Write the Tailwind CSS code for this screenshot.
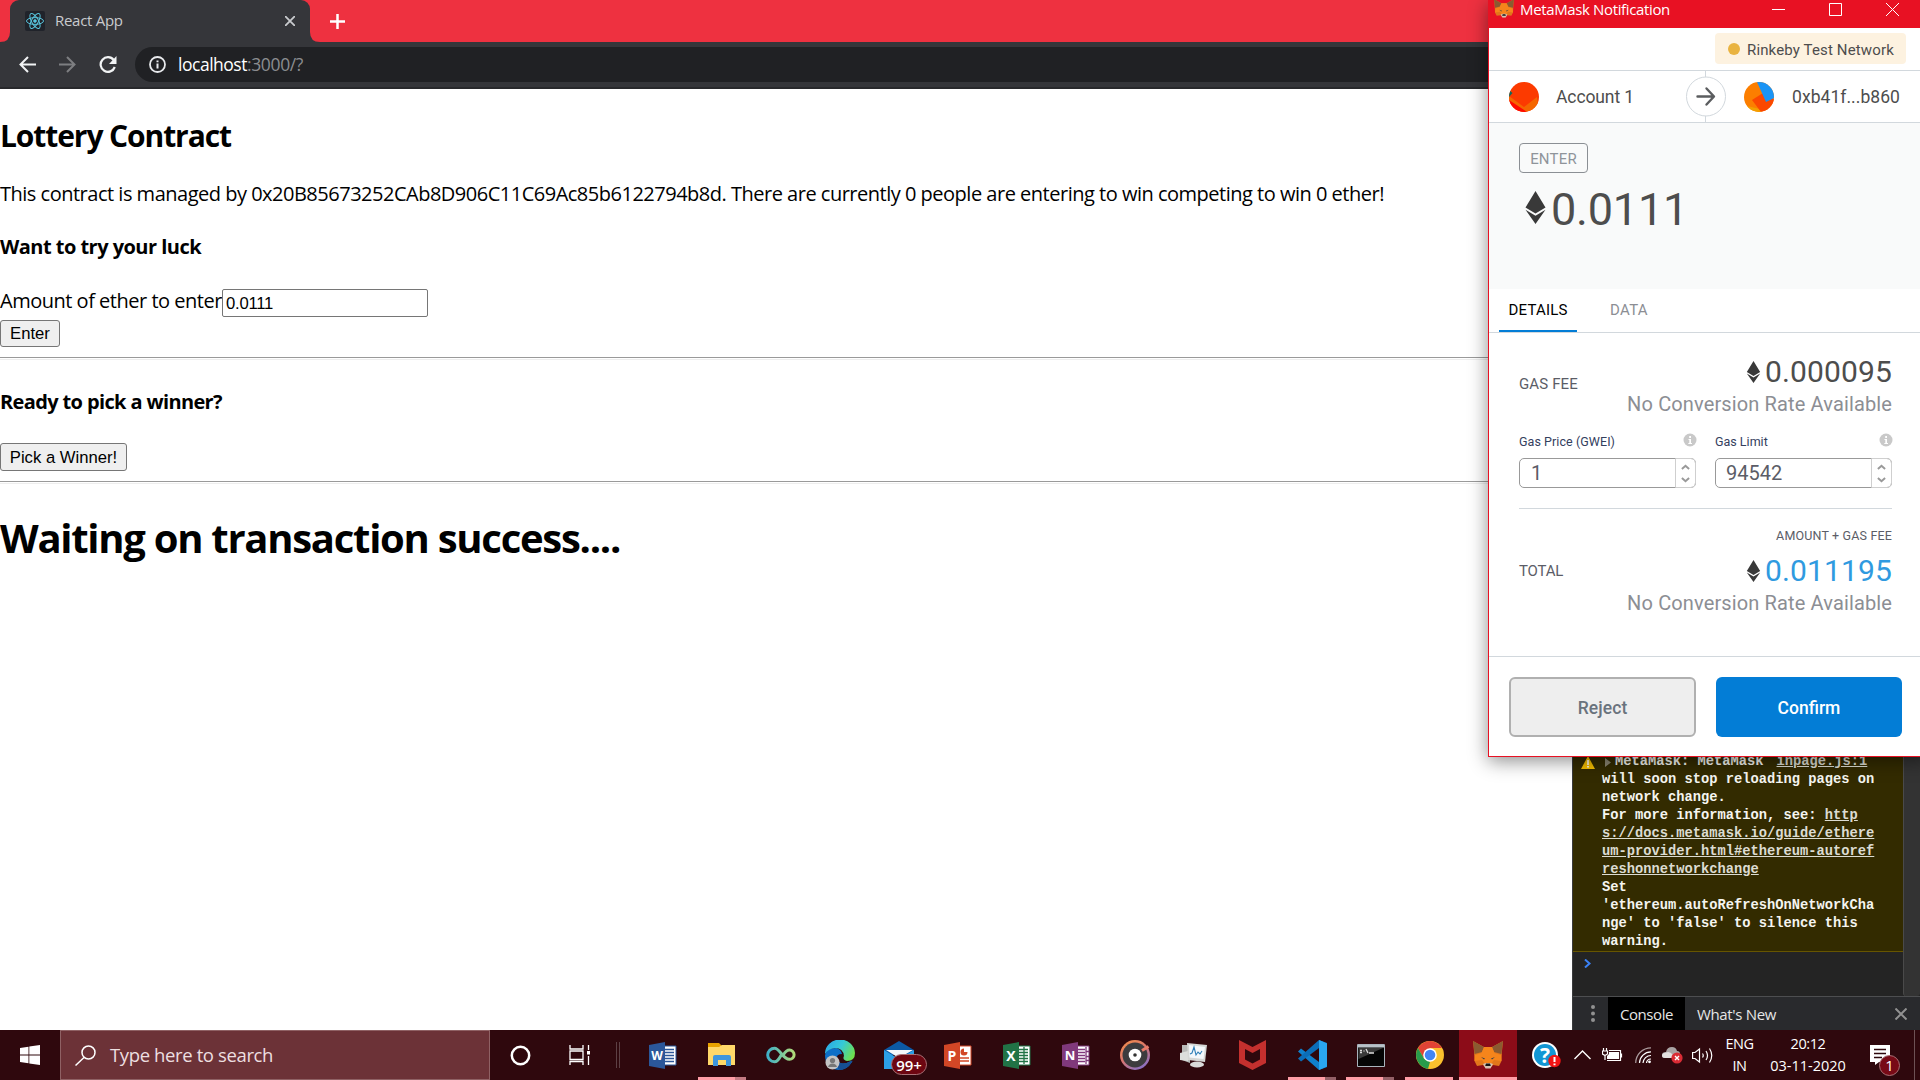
<!DOCTYPE html>
<html lang="en">
<head>
<meta charset="utf-8">
<title>React App</title>
<script src="https://cdn.jsdelivr.net/npm/@tailwindcss/browser@4"></script>
</head>
<body class="bg-white">
<svg class="hidden">
  <symbol id="fox" viewBox="0 0 30 28">
    <path fill="#e2761b" d="M0 0L11 6H19L30 0L29 10L28.500 20L26 25L20 24L17 27H13L10 24L4 25L1.500 20L1 10Z"/>
    <path fill="#8a5a32" d="M0 0L11 6L9 11L1.500 13L1 8ZM30 0L19 6L21 11L28.500 13L29 8Z"/>
    <path fill="#f6851b" d="M11 6H19L21.500 12L28 14L28.500 20L21 19L18 23H12L9 19L1.500 20L2 14L8.500 12Z"/>
    <path fill="#3b3f48" d="M8 16L12 17.500L11 18.500ZM22 16L18 17.500L19 18.500Z"/>
    <path fill="#d7c1b3" d="M10 23L13 22H17L20 23L17.500 27.500H12.500Z"/>
    <path fill="#161616" d="M13 22.500H17L17.800 25H12.200Z"/>
  </symbol>
  <symbol id="eth" viewBox="0 0 20 33">
    <path fill="#393939" d="M10 0L20 16.500L10 22.500L0 16.500ZM0 18.800L10 24.700L20 18.800L10 33Z"/>
  </symbol>
  <symbol id="hint" viewBox="0 0 14 14">
    <circle cx="7" cy="7" r="6.500" fill="#c9c9c9"/><path fill="#fff" d="M5.500 6H8V10H9V11H5.300V10H6.300V7H5.500ZM6.200 3H8V4.900H6.200Z"/>
  </symbol>
  <symbol id="spin" viewBox="0 0 10 20">
    <path fill="none" stroke="#999" stroke-width="2.200" d="M1 5L5 1.500L9 5M1 15L5 18.500L9 15"/>
  </symbol>
</svg>

<div class="relative flex h-[1080px] w-[1920px] flex-col overflow-hidden font-['Open_Sans',sans-serif]">

  <!-- Browser chrome -->
  <header class="shrink-0">
    <div class="flex h-[42px] items-center bg-[#ee3140]">
      <svg class="h-[42px] w-[10px]"><path fill="#35363a" d="M0 42H10V32Q10 42 0 42Z"/></svg>
      <div class="flex h-[42px] w-[300px] items-center rounded-t-[9px] bg-[#35363a] pl-[15px]">
        <svg class="size-5 rounded-[2px] bg-[#20232a]" viewBox="0 0 20 20" fill="none" stroke="#58c4dc" stroke-width="1"><ellipse cx="10" cy="10" rx="8.500" ry="3.400"/><ellipse cx="10" cy="10" rx="8.500" ry="3.400" transform="rotate(60 10 10)"/><ellipse cx="10" cy="10" rx="8.500" ry="3.400" transform="rotate(120 10 10)"/><circle cx="10" cy="10" r="1.300" fill="#58c4dc"/></svg>
        <span class="ml-[10px] text-[15px] leading-5 tracking-[-0.28px] whitespace-nowrap text-[#c9cbce] -mt-0.5">React App</span>
        <svg class="mr-[15px] ml-auto size-[10px]" viewBox="0 0 10 10" stroke="#c9cbce" stroke-width="1.800"><path d="M0 0L10 10M10 0L0 10"/></svg>
      </div>
      <svg class="h-[42px] w-[10px]"><path fill="#35363a" d="M0 32Q0 42 10 42H0Z"/></svg>
      <svg class="ml-[10px] size-[15px]" viewBox="0 0 15 15" stroke="#fff" stroke-width="2.500"><path d="M7.500 0V15M0 7.500H15"/></svg>
    </div>
    <div class="flex h-[47px] items-center border-b-2 border-[#28292c] bg-[#35363a] pl-[19px]">
      <svg class="size-[17px]" viewBox="0 0 17 17" fill="none" stroke="#f1f3f4" stroke-width="2"><path d="M17 8.500H2M9 1L1.500 8.500L9 16"/></svg>
      <svg class="ml-[23px] size-[17px]" viewBox="0 0 17 17" fill="none" stroke="#7d7e81" stroke-width="2"><path d="M0 8.500H15M8 1L15.500 8.500L8 16"/></svg>
      <svg class="ml-[23px] size-[18px]" viewBox="0 0 18 18" fill="none" stroke="#f1f3f4" stroke-width="2.200"><path d="M14.700 4A7.300 7.300 0 1 0 15.800 11"/><path d="M17.500 0V8H10Z" fill="#f1f3f4" stroke="none"/></svg>
      <div class="ml-[18px] flex h-[35px] flex-1 items-center rounded-l-full bg-[#202124] pl-[14px]">
        <svg class="size-[17px]" viewBox="0 0 17 17"><circle cx="8.500" cy="8.500" r="7.500" fill="none" stroke="#e8eaed" stroke-width="1.800"/><path fill="#e8eaed" d="M7.500 4.500H9.500V6.300H7.500ZM7.500 7.500H9.500V12.500H7.500Z"/></svg>
        <span class="-mt-0.5 ml-3 text-[17.5px] leading-6 tracking-[-0.48px] whitespace-nowrap text-white">localhost<span class="tracking-[-0.37px] text-[#8b8d90]">:3000/?</span></span>
      </div>
    </div>
  </header>

  <div class="flex h-[941px] shrink-0">
    <!-- Page content -->
    <main class="flex w-[1572px] flex-col items-start bg-white text-[20px] leading-[27px] whitespace-nowrap text-black">
      <h2 class="mt-[27px] text-[30px] leading-10 font-bold tracking-[-1.09px]">Lottery Contract</h2>
      <p class="mt-[24px] tracking-[-0.495px]">This contract is managed by 0x20B85673252CAb8D906C11C69Ac85b6122794b8d. There are currently 0 people are entering to win competing to win 0 ether!</p>
      <h4 class="mt-[26px] font-bold tracking-[-0.53px]">Want to try your luck</h4>
      <div class="mt-[28px] flex h-[29px] items-end">
        <label class="w-[222px] pb-[3px] tracking-[-0.49px]">Amount of ether to enter</label>
        <div class="flex h-[28px] w-[206px] items-center rounded-[2px] border border-[#767676] pl-[3px] font-['Liberation_Sans',sans-serif] text-[16.67px] tracking-[-0.25px]">0.0111</div>
      </div>
      <button class="mt-[3px] flex h-[27px] w-[60px] items-center justify-center rounded-[3px] border border-[#767676] bg-[#efefef] font-['Liberation_Sans',sans-serif] text-[16.67px]">Enter</button>
      <hr class="mt-[10px] h-[3px] w-full border-t border-b border-t-[#9a9a9a] border-b-[#eee]">
      <h4 class="mt-[28px] font-bold tracking-[-0.63px]">Ready to pick a winner?</h4>
      <button class="mt-[28px] flex h-[28px] w-[127px] items-center justify-center rounded-[3px] border border-[#767676] bg-[#efefef] font-['Liberation_Sans',sans-serif] text-[16.67px]">Pick a Winner!</button>
      <hr class="mt-[10px] h-[3px] w-full border-t border-b border-t-[#9a9a9a] border-b-[#eee]">
      <h1 class="mt-[27px] text-[40px] leading-[54px] font-bold tracking-[-1.27px]">Waiting on transaction success....</h1>
    </main>

    <!-- Developer tools -->
    <aside class="flex w-[348px] flex-col border-l border-[#3a3b3d] bg-[#242424]">
      <div class="flex h-[908px] border-b border-[#4d4e50]">
        <div class="flex w-[330px] flex-col">
          <div class="flex flex-1 flex-col justify-end border-b border-[#665500] bg-[#332b00]">
            <div class="flex pl-2">
              <svg class="mt-[3px] h-[13px] w-[14px]" viewBox="0 0 14 13"><path fill="#f4bd00" d="M7 0L14 13H0Z"/><path fill="#fff" d="M6.200 4H7.800V9H6.200ZM6.200 10H7.800V11.500H6.200Z"/></svg>
              <div class="ml-[7px] font-['Liberation_Mono',monospace] text-[13.75px] leading-[18px] font-bold whitespace-nowrap text-[#f5f5f0]">
                <div class="flex items-center"><svg class="ml-[3px] h-[9px] w-[6px]" viewBox="0 0 6 9"><path fill="#8b8672" d="M0 0L6 4.500L0 9Z"/></svg><span class="ml-[4px]">MetaMask: MetaMask</span><span class="ml-[13px] text-[#dcdcd2] underline">inpage.js:1</span></div>
                <div>will soon stop reloading pages on</div>
                <div>network change.</div>
                <div>For more information, see: <span class="text-[#dcdcd2] underline">http</span></div>
                <div class="text-[#dcdcd2] underline">s://docs.metamask.io/guide/ethere</div>
                <div class="text-[#dcdcd2] underline">um-provider.html#ethereum-autoref</div>
                <div class="text-[#dcdcd2] underline">reshonnetworkchange</div>
                <div>Set</div>
                <div>'ethereum.autoRefreshOnNetworkCha</div>
                <div>nge' to 'false' to silence this</div>
                <div>warning.</div>
              </div>
            </div>
          </div>
          <div class="h-[44px] pt-[7px] pl-[11px]"><svg class="h-[9px] w-[7px]" viewBox="0 0 7 9" fill="none" stroke="#3b82f6" stroke-width="2"><path d="M1 .5L5.500 4.500L1 8.500"/></svg></div>
        </div>
        <div class="flex-1 rounded-b-[3px] border-l border-[#4a4a4a] bg-[#333]"></div>
      </div>
      <div class="flex h-[33px] items-center bg-[#292a2d]">
        <svg class="ml-[18px] h-[17px] w-[4px]" viewBox="0 0 4 17" fill="#919191"><circle cx="2" cy="2" r="2"/><circle cx="2" cy="8.500" r="2"/><circle cx="2" cy="15" r="2"/></svg>
        <div class="ml-[13px] flex h-full w-[77px] items-center justify-center bg-black pt-0.5 text-[15px] tracking-[-0.44px] text-[#e6e6e6]">Console</div>
        <span class="ml-3 pt-0.5 text-[15px] tracking-[-0.34px] whitespace-nowrap text-[#e6e6e6]">What's New</span>
        <svg class="mr-[13px] ml-auto size-3" viewBox="0 0 12 12" stroke="#919191" stroke-width="2"><path d="M.5 .5L11.500 11.500M11.500 .5L.5 11.500"/></svg>
      </div>
    </aside>
  </div>

  <!-- Taskbar -->
  <footer class="flex h-[50px] shrink-0 items-center bg-[#2f080d]">
    <div class="flex w-[60px] justify-center"><svg class="size-5" viewBox="0 0 20 20" fill="#fff"><path d="M0 3L8.500 1.700V9.500H0ZM9.300 1.500L20 0V9.500H9.300ZM0 10.500H8.500V18.300L0 17ZM9.300 10.500H20V20L9.300 18.500Z"/></svg></div>
    <div class="flex h-[50px] w-[430px] items-center border border-[#8f6164] bg-[#6c3237] pl-[14px]">
      <svg class="size-[21px]" viewBox="0 0 21 21" fill="none" stroke="#fff" stroke-width="1.500"><circle cx="13.500" cy="7.500" r="6.500"/><path d="M9 12.500L.5 20.500"/></svg>
      <span class="ml-[14px] text-[18.5px] tracking-[-0.38px] whitespace-nowrap text-[#ecdfe0]">Type here to search</span>
    </div>
    <svg class="ml-5 size-[21px]" viewBox="0 0 21 21"><circle cx="10.500" cy="10.500" r="8.700" fill="none" stroke="#fff" stroke-width="2.500"/></svg>
    <svg class="ml-[38px] h-[20px] w-[22px]" viewBox="0 0 22 20" fill="none" stroke="#fff" stroke-width="1.300"><path d="M1 0V4H14V0M1 6H14V14.500H1ZM1 20V16.500H14V20M19.500 0V5M19.500 11V20"/><path fill="#fff" stroke="none" d="M18 6H21V9.500H18Z"/></svg>
    <div class="ml-[25px] h-[26px] w-1 border-x border-[#5d4044]"></div>
    <div class="ml-[13px] flex h-[50px]">
      <div class="flex w-[59px] items-center justify-center"><svg class="h-[27px] w-[28px]" viewBox="0 0 28 27"><path fill="#fff" stroke="#2b579a" d="M14 4H27V23H14Z"/><path stroke="#2b579a" stroke-width="1.300" d="M16 7.500H25M16 10.500H25M16 13.500H25M16 16.500H25M16 19.500H25"/><path fill="#2b579a" d="M0 3L16 0V27L0 24Z"/><text x="8" y="18" fill="#fff" font-size="12" font-weight="700" text-anchor="middle">W</text></svg></div>
      <div class="relative flex w-[59px] items-center justify-center"><svg class="h-[24px] w-[28px]" viewBox="0 0 28 24"><path fill="#e8a200" d="M0 0H11L14 3V8H0Z"/><path fill="#ffd869" d="M0 4H11L14 2H27V22H0Z"/><path fill="#3f96dc" d="M5 23V14Q5 12 7 12H21Q23 12 23 14V23H18V17H10V23Z"/></svg><div class="absolute bottom-0 left-[6px] flex h-[3px] w-[48px] bg-[#ff9da6]"><div class="ml-auto w-[11px] bg-[#c47b83]"></div></div></div>
      <div class="flex w-[59px] items-center justify-center"><svg class="h-[18px] w-[30px]" viewBox="0 0 30 18"><defs><linearGradient id="inf"><stop offset="0" stop-color="#3fb0c8"/><stop offset="1" stop-color="#b0dc78"/></linearGradient></defs><path fill="none" stroke="url(#inf)" stroke-width="3" d="M15.500 8.500C13.500 12 12 15.800 8.500 15.800A6.800 6.800 0 1 1 8.500 2.200C14 2.200 16.500 13.300 23.500 13.300A4.600 4.600 0 1 0 23.500 4.100C20 4.100 18.500 7 17 9.500"/></svg></div>
      <div class="flex w-[59px] items-center justify-center"><svg class="size-[30px]" viewBox="0 0 30 30"><defs><linearGradient id="edg" x1="0" x2="1" y1=".2" y2=".6"><stop offset="0" stop-color="#2aa8e8"/><stop offset=".5" stop-color="#35c9d8"/><stop offset="1" stop-color="#6fe04c"/></linearGradient></defs><path fill="#0d6fc8" d="M0 15Q2 8 11 8Q16 9 17 14Q11 14 12 19Q15 27 26 21Q28 20 27 22Q22 30 14 30Q0 29 0 15Z"/><path fill="url(#edg)" d="M0 14A15 14 0 0 1 30 13Q30 21 22 21Q17 20 19 16Q18 8 10 8Q3 9 0 14Z"/><path fill="#164f94" d="M12 19Q15 27 26 21Q28 20 27 22Q22 30 14 30Q11 27 12 19Z"/><circle cx="7.500" cy="22.500" r="7" fill="#c4c4c4"/><circle cx="7.500" cy="20.500" r="2.600" fill="#777"/><path fill="#777" d="M3 27Q4 23.500 7.500 23.500T12 27Z"/></svg></div>
      <div class="relative flex w-[59px] items-center justify-center"><svg class="h-[28px] w-[30px]" viewBox="0 0 30 28"><path fill="#0c59a4" d="M0 9L15 0L30 9V14H0Z"/><path fill="#2c9fe6" d="M0 9L15 18L30 9V28H0Z"/><path fill="#f4f8fc" d="M2 9H29L15 17Z"/></svg><div class="absolute top-[24px] left-[22px] flex h-[21px] w-[36px] items-center justify-center rounded-full border border-[#a87076] bg-[#6d0611] text-[15px] leading-4 font-semibold text-white">99+</div></div>
      <div class="flex w-[59px] items-center justify-center"><svg class="h-[27px] w-[28px]" viewBox="0 0 28 27"><path fill="#fff" stroke="#d24726" d="M14 4H27V23H14Z"/><circle cx="20" cy="10" r="3.500" fill="#d24726"/><path fill="#fff" d="M20 6V10H24V6Z"/><path stroke="#d24726" stroke-width="1.300" d="M16 16H25M16 19H25"/><path fill="#d24726" d="M0 3L16 0V27L0 24Z"/><text x="8" y="18.500" fill="#fff" font-size="14" font-weight="700" text-anchor="middle">P</text></svg></div>
      <div class="flex w-[59px] items-center justify-center"><svg class="h-[27px] w-[28px]" viewBox="0 0 28 27"><path fill="#fff" stroke="#217346" d="M14 4H27V23H14Z"/><path stroke="#217346" stroke-width="1.300" d="M16 7.500H25M16 10.500H25M16 13.500H25M16 16.500H25M16 19.500H25M21 5V22"/><path fill="#217346" d="M0 3L16 0V27L0 24Z"/><text x="8" y="18.500" fill="#fff" font-size="14" font-weight="700" text-anchor="middle">X</text></svg></div>
      <div class="flex w-[59px] items-center justify-center"><svg class="h-[27px] w-[28px]" viewBox="0 0 28 27"><path fill="#fff" stroke="#80397b" d="M14 4H27V23H14Z"/><path stroke="#80397b" stroke-width="1.300" d="M16 7.500H23M16 10.500H23M16 13.500H23M16 16.500H23M16 19.500H23M24 5V22M24 9.500H27M24 14.500H27M24 18.500H27"/><path fill="#80397b" d="M0 3L16 0V27L0 24Z"/><text x="8" y="18" fill="#fff" font-size="13" font-weight="700" text-anchor="middle">N</text></svg></div>
      <div class="flex w-[59px] items-center justify-center"><svg class="size-[30px]" viewBox="0 0 30 30"><defs><linearGradient id="mus" x1=".2" x2=".8" y1="0" y2="1"><stop offset="0" stop-color="#f08a4b"/><stop offset=".45" stop-color="#d9766e"/><stop offset="1" stop-color="#7d6fd0"/></linearGradient></defs><circle cx="15" cy="15" r="15" fill="url(#mus)"/><circle cx="15" cy="15" r="12.500" fill="#3c3c3e"/><path stroke="#e97a68" stroke-width="3" d="M22 10.500L28.500 6.500"/><circle cx="15" cy="15" r="6.300" fill="#fff"/><circle cx="15" cy="15" r="1.800" fill="#333"/></svg></div>
      <div class="flex w-[59px] items-center justify-center"><svg class="h-[26px] w-[28px]" viewBox="0 0 28 26"><path fill="#b8bab8" d="M2 3H10V21L2 18Z"/><path fill="#dcdedc" d="M0 11L8 9V19L0 18Z"/><path fill="#d5d7d5" d="M7 1L27 3L25 20L8 18Z"/><path fill="#f4f8fb" d="M9 3L25 5L23.500 17L9.500 15.500Z"/><path fill="none" stroke="#2e7fb8" stroke-width="1.100" d="M10 12L12 11L14 5L16 13L18 10L20 12L22 9"/><ellipse cx="17" cy="22.500" rx="7" ry="3" fill="#d9dbda"/></svg></div>
      <div class="flex w-[59px] items-center justify-center"><svg class="h-[30px] w-[27px]" viewBox="0 0 27 30"><path fill="#c4302e" d="M0 0L13.500 7L27 0V23L13.500 30L0 23Z"/><path fill="#2f080d" d="M6 9L13.500 13L21 9V19.500L13.500 23.500L6 19.500Z"/></svg></div>
      <div class="relative flex w-[59px] items-center justify-center"><svg class="size-[30px]" viewBox="0 0 30 30"><path fill="#1080cc" d="M22 0L30 3V27L22 30L1 11.500L4 8.500L22 22Z"/><path fill="#0b6db8" d="M22 0V8L4 21.500L1 18.500Z"/><path fill="#2aa6f0" d="M22 0L30 3.500V26.500L22 30Z"/></svg><div class="absolute bottom-0 left-[6px] flex h-[3px] w-[48px] bg-[#ff9da6]"><div class="ml-auto w-[11px] bg-[#946067]"></div></div></div>
      <div class="relative flex w-[59px] items-center justify-center"><svg class="h-[23px] w-[28px]" viewBox="0 0 28 23"><path fill="#050505" stroke="#a9b4bc" d="M.5 .5H27.500V22.500H.5Z"/><path fill="#b9c2c8" d="M1 1H27V3.500H1Z"/><path fill="#3a3a3a" d="M1.500 4H26L1.500 15Z"/><path stroke="#ddd" stroke-width="1.300" d="M3 6.500H5M3 8.500H5M7 6.500V7.500M9 5L11 9M12 9H17"/></svg><div class="absolute bottom-0 left-[5px] flex h-[3px] w-[48px] bg-[#ff9da6]"><div class="ml-auto w-[11px] bg-[#946067]"></div></div></div>
      <div class="relative flex w-[59px] items-center justify-center"><svg class="size-7" viewBox="0 0 28 28"><circle cx="14" cy="14" r="14" fill="#fbc02d"/><path fill="#e04335" d="M1.900 7A14 14 0 0 1 26.100 7H14L8 17.500Z"/><path fill="#289b4b" d="M1.900 7L8 17.500L14 21L12 27.800A14 14 0 0 1 1.900 7Z"/><circle cx="14" cy="14" r="6.800" fill="#fff"/><circle cx="14" cy="14" r="5.300" fill="#4285f4"/></svg><div class="absolute bottom-0 left-[5px] h-[3px] w-[48px] bg-[#ff9da6]"></div></div>
      <div class="relative flex w-[58px] items-center justify-center border-b-[3px] border-[#ff9da6] bg-[#8c0c18]"><svg class="mt-[3px] h-[28px] w-[30px]"><use href="#fox"/></svg></div>
    </div>
    <svg class="ml-[15px] size-[29px]" viewBox="0 0 29 29"><circle cx="13" cy="14" r="13" fill="#fff"/><circle cx="13" cy="14" r="11" fill="#1296d4"/><text x="13" y="21.500" fill="#fff" font-size="21" font-weight="700" text-anchor="middle">?</text><circle cx="22.500" cy="20" r="6.200" fill="#f01414"/><path fill="#fff" d="M21.500 16H23.500V21H21.500ZM21.500 22.500H23.500V24.300H21.500Z"/></svg>
    <svg class="ml-[13px] h-[10px] w-[17px]" viewBox="0 0 17 10" fill="none" stroke="#fff" stroke-width="1.400"><path d="M.5 9L8.500 1L16.500 9"/></svg>
    <svg class="ml-[11px] h-[14px] w-[21px]" viewBox="0 0 21 14" fill="none" stroke="#fff" stroke-width="1.200"><path d="M5 12.500H18.500V2.500H7M19.500 5.500V9.500M1.500 0V3M4.500 0V3M0.500 3H5.500V6L3 7.500L.5 6ZM3 7.500V12"/><path fill="#fff" stroke="none" d="M7 4H17V11H5V8L7 6Z"/></svg>
    <svg class="ml-[12px] size-[17px]" viewBox="0 0 17 17" fill="none" stroke="#fff" stroke-width="1.200"><path opacity=".6" d="M.7 16A15.300 15.300 0 0 1 16 .8"/><path d="M4.500 16A11.500 11.500 0 0 1 16 4.800M8 16A8 8 0 0 1 16 8.500M11.500 16A4.500 4.500 0 0 1 16 12"/><circle cx="14.500" cy="14.800" r="1.400" fill="#fff" stroke="none"/></svg>
    <svg class="ml-[10px] h-[18px] w-[21px]" viewBox="0 0 21 18"><path fill="#a9a3a4" d="M3 12Q0 12 0 9T4 6Q5 1 10 1Q14 1 15 5Q18 5 18 8Q18 12 15 12Z"/><path fill="#e4e0e0" d="M3 12Q0 12 0 9.500T4 6.500Q8 5 11 9L12 12Z"/><circle cx="15" cy="12" r="5.600" fill="#da2c35"/><path stroke="#fff" stroke-width="1.400" d="M13 10L17 14M17 10L13 14"/></svg>
    <svg class="ml-[9px] h-[17px] w-[21px]" viewBox="0 0 21 17" fill="none" stroke="#fff" stroke-width="1.200"><path d="M.6 5.500H3L7.500 2V15L3 11.500H.6ZM10.500 6.500Q12 8.500 10.500 10.500M14 4Q17 8.500 14 13M17.500 1.500Q22 8.500 17.500 15.500"/></svg>
    <div class="ml-[8px] flex w-[37px] flex-col items-center text-[14.5px] leading-[22px] tracking-[-0.5px] text-white"><span>ENG</span><span>IN</span></div>
    <div class="ml-[6px] flex w-[88px] flex-col items-center text-[14.5px] leading-[22px] whitespace-nowrap text-white"><span class="tracking-[-0.4px]">20:12</span><span>03-11-2020</span></div>
    <div class="relative ml-[18px] h-[50px] w-[34px]"><svg class="mt-[15px] h-[20px] w-[20px]" viewBox="0 0 20 20"><path fill="#fff" d="M0 0H20V17H9L5 20V17H0Z"/><path stroke="#2f080d" stroke-width="1.300" d="M4 4.500H16M4 8.500H16M4 12.500H12"/></svg><div class="absolute top-[25px] left-[9px] flex size-[21px] items-center justify-center rounded-full border border-[#a87076] bg-[#780a16] text-[15px] text-white">1</div></div>
    <div class="ml-auto h-[50px] w-[6px] border-l border-[#6d5154]"></div>
  </footer>

  <!-- Wallet popup window -->
  <section class="absolute top-0 left-[1488px] flex h-[757px] w-[440px] flex-col border-b border-l border-[#e81123] bg-white font-['Roboto',sans-serif] text-[#4d4d4d] shadow-[0_4px_18px_rgba(0,0,0,0.45)]">
    <div class="flex h-[28px] w-[431px] shrink-0 items-start bg-[#e81123]">
      <svg class="-mt-[1px] ml-[5px] h-[19px] w-[20px]"><use href="#fox"/></svg>
      <span class="-mt-px ml-[6px] font-['Open_Sans',sans-serif] text-[15px] leading-5 tracking-[-0.36px] whitespace-nowrap text-white">MetaMask Notification</span>
      <svg class="mt-[3px] mr-[21px] ml-auto h-[13px] w-[127px]" viewBox="0 0 127 13" fill="none" stroke="#fff" stroke-width="1"><path d="M0 6.500H13M57.500 .5H69.500V12.500H57.500ZM114 0L127 13M127 0L114 13"/></svg>
    </div>
    <div class="flex h-[43px] w-[431px] shrink-0 items-start justify-end border-b border-[#d2d8dd] pt-[5px] pr-[14px]">
      <div class="flex h-[31px] w-[191px] items-center rounded-[4px] bg-[#fdf2e0] pl-[13px]"><div class="size-3 rounded-full bg-[#e9b340]"></div><span class="ml-[7px] pt-[3px] text-[15px] tracking-[0.14px] whitespace-nowrap">Rinkeby Test Network</span></div>
    </div>
    <div class="flex h-[52px] w-[431px] shrink-0 items-center border-b border-[#d2d8dd] pl-[20px]">
      <svg class="size-[30px] rounded-full bg-[#fc3a00]" viewBox="0 0 30 30"><path fill="#f56600" d="M0 14L15 25L28 15L30 30H12L0 20Z"/><path fill="#ff0a00" d="M0 18L18 30H0Z"/><path fill="#0a6b60" d="M0 8L3.500 11L0 15Z"/></svg>
      <span class="ml-[17px] pt-[2px] text-[17.5px] tracking-[-0.1px] whitespace-nowrap">Account 1</span>
      <svg class="ml-auto h-[51px] w-[42px]" viewBox="0 0 42 51" fill="none"><path stroke="#d2d8dd" d="M20.500 0V51"/><circle cx="21" cy="25.500" r="19.500" fill="#fff" stroke="#d2d8dd"/><path stroke="#5b5d5f" stroke-width="2.400" stroke-linecap="round" stroke-linejoin="round" d="M12.500 25.500H28.500M21.500 17.500L29 25.500L21.500 33.500"/></svg>
      <svg class="ml-[17px] size-[30px] rounded-full bg-[#fc7e00]" viewBox="0 0 30 30"><path fill="#f3a000" d="M3 24L20 28L16 30H3Z"/><path fill="#fb4800" d="M8 18L19 11L30 17V30H17Z"/><path fill="#1a94f5" d="M13 0H30V16L22 20Z"/></svg>
      <span class="mr-[20px] ml-[18px] pt-[2px] text-[17.5px] tracking-[0.05px] whitespace-nowrap">0xb41f...b860</span>
    </div>
    <div class="h-[166px] w-[431px] shrink-0 bg-[#f9fafa] pt-[20px] pl-[30px]">
      <div class="flex h-[30px] w-[69px] items-center justify-center rounded-[4px] border border-[#8b8f94] pt-[2px] text-[15px] tracking-[0.2px] text-[#8f949a]">ENTER</div>
      <div class="mt-[17px] ml-[6px] flex"><svg class="mt-px h-[33px] w-[21px]"><use href="#eth"/></svg><span class="ml-[5px] text-[45px] leading-[39px] tracking-[-0.2px] whitespace-nowrap">0.0111</span></div>
    </div>
    <div class="flex h-[44px] w-[431px] shrink-0 items-end border-b border-[#d2d8dd] pl-[10px] text-[15px] leading-5">
      <div class="flex h-[43px] w-[78px] justify-center border-b-2 border-[#037dd6] pt-[11px] tracking-[0.18px] text-black">DETAILS</div>
      <div class="ml-[33px] h-[43px] pt-[11px] tracking-[0.3px] text-[#8c8e94]">DATA</div>
    </div>
    <div class="flex h-[323px] w-[403px] shrink-0 flex-col pl-[30px]">
      <div class="flex h-[84px] items-start justify-between pt-[20px]">
        <span class="pt-[20px] text-[15px] tracking-[0.14px] text-[#5b5d67]">GAS FEE</span>
        <div class="flex flex-col items-end"><div class="flex items-center"><svg class="h-[22px] w-[15px]"><use href="#eth"/></svg><span class="ml-[4px] text-[30px] leading-[37px] tracking-[0.13px] whitespace-nowrap">0.000095</span></div><span class="text-[20px] leading-[28px] tracking-[0.13px] whitespace-nowrap text-[#8c8e94]">No Conversion Rate Available</span></div>
      </div>
      <div class="mt-[10px] flex gap-[19px] text-[12.5px] leading-5 text-[#34405e]">
        <div class="w-[177px]">
          <div class="flex h-[31px] justify-between"><span class="pt-[5px] tracking-[0.06px] whitespace-nowrap">Gas Price (GWEI)</span><svg class="mt-[6px] -mr-px size-[14px]"><use href="#hint"/></svg></div>
          <div class="flex h-[30px] items-center rounded-[5px] border border-[#999] pl-[11px] text-[20px] text-[#5b5d67]">1<div class="-mr-px ml-auto flex h-[30px] w-[21px] items-center justify-center rounded-r-[5px] border border-[#cfcfcf]"><svg class="h-[19px] w-[9px]"><use href="#spin"/></svg></div></div>
        </div>
        <div class="w-[177px]">
          <div class="flex h-[31px] justify-between"><span class="pt-[5px] whitespace-nowrap">Gas Limit</span><svg class="mt-[6px] -mr-px size-[14px]"><use href="#hint"/></svg></div>
          <div class="flex h-[30px] items-center rounded-[5px] border border-[#999] pl-[10px] text-[20px] text-[#5b5d67]">94542<div class="-mr-px ml-auto flex h-[30px] w-[21px] items-center justify-center rounded-r-[5px] border border-[#cfcfcf]"><svg class="h-[19px] w-[9px]"><use href="#spin"/></svg></div></div>
        </div>
      </div>
      <div class="mt-[20px] border-t border-[#d2d8dd] pt-[18px] text-right text-[12.5px] leading-[18px] tracking-[0.16px] text-[#5b5d67]">AMOUNT + GAS FEE</div>
      <div class="flex items-start justify-between pt-[7px]">
        <span class="pt-[8px] text-[15px] tracking-[-0.2px] text-[#5b5d67]">TOTAL</span>
        <div class="flex flex-col items-end"><div class="flex items-center"><svg class="h-[22px] w-[15px]"><use href="#eth"/></svg><span class="ml-[4px] text-[30px] leading-[37px] tracking-[0.13px] whitespace-nowrap text-[#2f9ae0]">0.011195</span></div><span class="text-[20px] leading-[28px] tracking-[0.13px] whitespace-nowrap text-[#8c8e94]">No Conversion Rate Available</span></div>
      </div>
    </div>
    <div class="flex h-[100px] w-[431px] shrink-0 gap-5 border-t border-[#d2d8dd] pt-[20px] pl-[20px] text-[17.5px] font-medium">
      <button class="h-[60px] w-[187px] rounded-[6px] border-2 border-[#b0b0b0] bg-[#eee] pt-[2px] tracking-[0.1px] text-[#6a737d]">Reject</button>
      <button class="h-[60px] w-[186px] rounded-[6px] bg-[#037dd6] pt-[2px] text-white">Confirm</button>
    </div>
  </section>
</div>
</body>
</html>
